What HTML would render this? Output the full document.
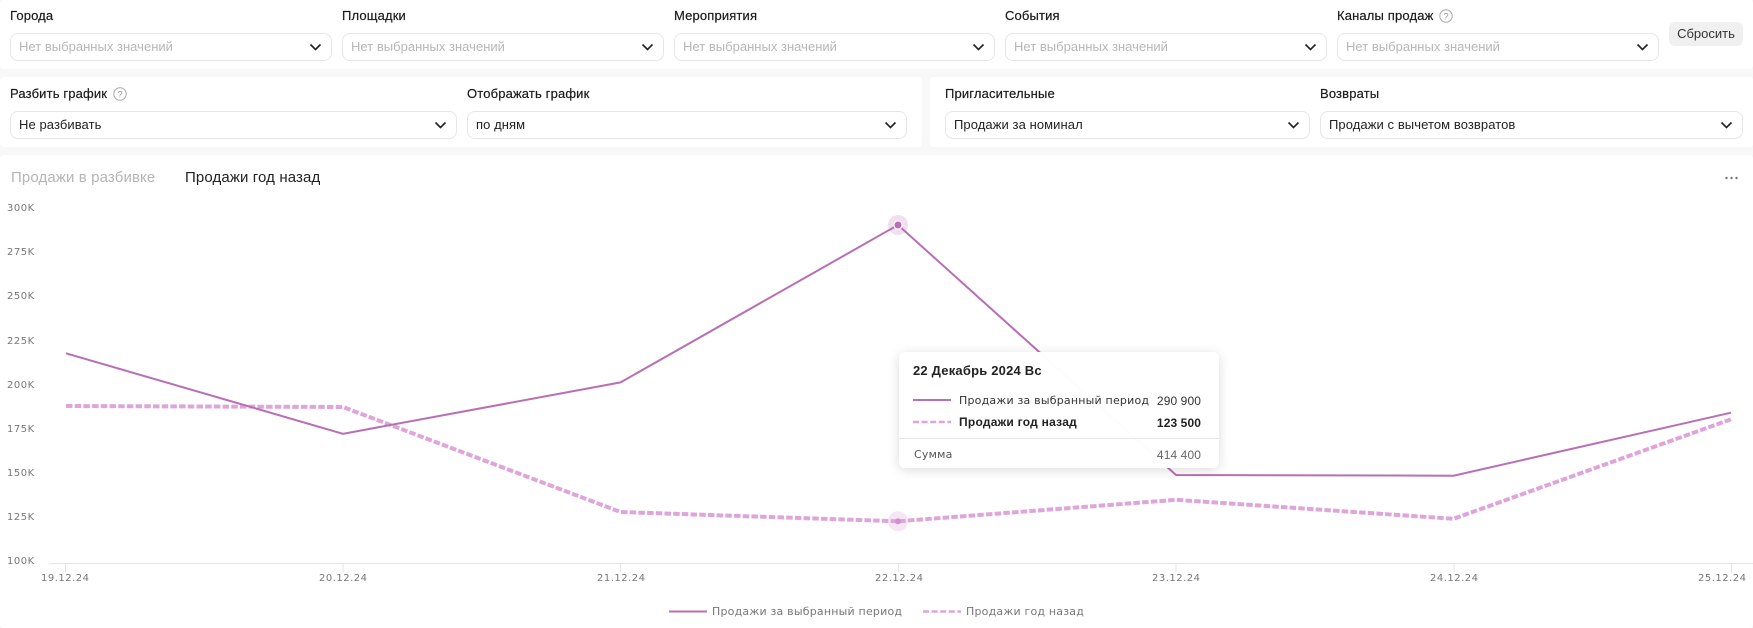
<!DOCTYPE html>
<html lang="ru"><head><meta charset="utf-8"><title>Продажи</title>
<style>
html,body{margin:0;padding:0;background:#f8f8f8}
body{width:1753px;height:628px;position:relative;overflow:hidden;font-family:"Liberation Sans",sans-serif;color:#222}
.p{position:absolute;background:#fff;border-radius:4px}
.l,.v,.s,.t,.a{position:absolute;white-space:nowrap}
.l{font-size:13px;line-height:16px;color:#1a1a1a;letter-spacing:.15px;-webkit-text-stroke:.2px #1a1a1a}
.s{box-sizing:border-box;height:28px;border:1px solid #e6e6e6;border-radius:8px;background:#fff;font-size:13px;line-height:26px;padding-left:8px;color:#222;letter-spacing:.08px}
.s.e{color:#b7b7b7;letter-spacing:.02px}
.s svg{position:absolute;right:9px;top:9px}
.a{font-family:"DejaVu Sans",sans-serif;font-size:10px;letter-spacing:.5px;color:#777;line-height:12px}
.t{font-family:"DejaVu Sans",sans-serif;font-size:11px;letter-spacing:.2px;line-height:14px;color:#333}
.b{font-family:"Liberation Sans",sans-serif;font-weight:bold;color:#222}
.n{font-family:"Liberation Sans",sans-serif;font-size:12px;line-height:14px;letter-spacing:.1px;position:absolute;white-space:nowrap;text-align:right;right:18px}
svg.q{position:absolute}
</style></head><body>
<div class="p" style="left:0;top:0;width:1753px;height:69px"></div>
<div class="p" style="left:0;top:77px;width:922px;height:70px"></div>
<div class="p" style="left:930px;top:77px;width:823px;height:70px"></div>
<div class="p" style="left:0;top:155px;width:1753px;height:473px"></div>

<div class="l" style="left:10px;top:8px">Города</div>
<div class="l" style="left:342px;top:8px">Площадки</div>
<div class="l" style="left:674px;top:8px">Мероприятия</div>
<div class="l" style="left:1005px;top:8px">События</div>
<div class="l" style="left:1337px;top:8px">Каналы продаж</div>
<svg class="q" style="left:1439px;top:9px" width="14" height="14" viewBox="0 0 14 14"><circle cx="7" cy="7" r="6.2" fill="none" stroke="#aaa"/><text x="7" y="10.5" text-anchor="middle" font-size="9.5" font-family="Liberation Sans" fill="#999">?</text></svg>

<div class="s e" style="left:10px;top:33px;width:322px">Нет выбранных значений<svg width="13" height="8" viewBox="0 0 13 8"><path d="M1.5 1.5 6.5 6.5l5-5" fill="none" stroke="#222" stroke-width="1.6"/></svg></div>
<div class="s e" style="left:342px;top:33px;width:322px">Нет выбранных значений<svg width="13" height="8" viewBox="0 0 13 8"><path d="M1.5 1.5 6.5 6.5l5-5" fill="none" stroke="#222" stroke-width="1.6"/></svg></div>
<div class="s e" style="left:674px;top:33px;width:321px">Нет выбранных значений<svg width="13" height="8" viewBox="0 0 13 8"><path d="M1.5 1.5 6.5 6.5l5-5" fill="none" stroke="#222" stroke-width="1.6"/></svg></div>
<div class="s e" style="left:1005px;top:33px;width:322px">Нет выбранных значений<svg width="13" height="8" viewBox="0 0 13 8"><path d="M1.5 1.5 6.5 6.5l5-5" fill="none" stroke="#222" stroke-width="1.6"/></svg></div>
<div class="s e" style="left:1337px;top:33px;width:322px">Нет выбранных значений<svg width="13" height="8" viewBox="0 0 13 8"><path d="M1.5 1.5 6.5 6.5l5-5" fill="none" stroke="#222" stroke-width="1.6"/></svg></div>
<div class="v" style="left:1669px;top:22px;width:74px;height:24px;background:#f0f0f0;border-radius:6px;font-size:13px;line-height:24px;text-align:center;color:#333">Сбросить</div>

<div class="l" style="left:10px;top:86px">Разбить график</div>
<svg class="q" style="left:113px;top:87px" width="14" height="14" viewBox="0 0 14 14"><circle cx="7" cy="7" r="6.2" fill="none" stroke="#aaa"/><text x="7" y="10.5" text-anchor="middle" font-size="9.5" font-family="Liberation Sans" fill="#999">?</text></svg>
<div class="l" style="left:467px;top:86px">Отображать график</div>
<div class="l" style="left:945px;top:86px">Пригласительные</div>
<div class="l" style="left:1320px;top:86px">Возвраты</div>

<div class="s" style="left:10px;top:111px;width:447px">Не разбивать<svg width="13" height="8" viewBox="0 0 13 8"><path d="M1.5 1.5 6.5 6.5l5-5" fill="none" stroke="#222" stroke-width="1.6"/></svg></div>
<div class="s" style="left:467px;top:111px;width:440px">по дням<svg width="13" height="8" viewBox="0 0 13 8"><path d="M1.5 1.5 6.5 6.5l5-5" fill="none" stroke="#222" stroke-width="1.6"/></svg></div>
<div class="s" style="left:945px;top:111px;width:365px">Продажи за номинал<svg width="13" height="8" viewBox="0 0 13 8"><path d="M1.5 1.5 6.5 6.5l5-5" fill="none" stroke="#222" stroke-width="1.6"/></svg></div>
<div class="s" style="left:1320px;top:111px;width:423px">Продажи с вычетом возвратов<svg width="13" height="8" viewBox="0 0 13 8"><path d="M1.5 1.5 6.5 6.5l5-5" fill="none" stroke="#222" stroke-width="1.6"/></svg></div>

<div class="v" style="left:11px;top:169px;font-size:15px;line-height:18px;color:#b5b5b5;letter-spacing:.12px">Продажи в разбивке</div>
<div class="v" style="left:185px;top:169px;font-size:15px;line-height:18px;color:#222;letter-spacing:.12px">Продажи год назад</div>
<svg class="q" style="left:1724px;top:175px" width="16" height="6" viewBox="0 0 16 6"><circle cx="2.5" cy="3" r="1.2" fill="#777"/><circle cx="7.5" cy="3" r="1.2" fill="#777"/><circle cx="12.5" cy="3" r="1.2" fill="#777"/></svg>

<div class="a" style="left:7px;top:203px">300K</div>
<div class="a" style="left:7px;top:247px">275K</div>
<div class="a" style="left:7px;top:291px">250K</div>
<div class="a" style="left:7px;top:336px">225K</div>
<div class="a" style="left:7px;top:380px">200K</div>
<div class="a" style="left:7px;top:424px">175K</div>
<div class="a" style="left:7px;top:468px">150K</div>
<div class="a" style="left:7px;top:512px">125K</div>
<div class="a" style="left:7px;top:556px">100K</div>

<svg class="q" style="left:0;top:0" width="1753" height="628" viewBox="0 0 1753 628">
<path d="M49 563.5H1753" stroke="#e5e5e5" fill="none"/>
<path d="M65.5 563v9M343 563v9M620.5 563v9M898.5 563v9M1176 563v9M1454 563v9M1731.5 563v9" stroke="#e5e5e5" fill="none"/>
<circle cx="898" cy="225" r="10" fill="#f1dff0"/>
<circle cx="898" cy="521.3" r="10" fill="#f5e6f4"/>
<polyline points="66,406 343,407 620.5,512 898,521.3 1176,499.8 1453.5,518.8 1731,419.3" fill="none" stroke="#dfa5db" stroke-width="4" stroke-dasharray="6.5 2.2"/>
<polyline points="66,353.3 343,433.8 620.5,382.4 898,225 1176,475 1453.5,475.7 1731,412.7" fill="none" stroke="#b96fb4" stroke-width="2"/>
<circle cx="898" cy="225" r="4.6" fill="#fff"/><circle cx="898" cy="225" r="3.5" fill="#b96fb4"/>
<circle cx="898" cy="521.3" r="3" fill="#d48fd0"/>
<path d="M669 611.5h38" stroke="#b96fb4" stroke-width="2"/>
<path d="M923 611.5h38" stroke="#dfa5db" stroke-width="2.5" stroke-dasharray="6 2.6"/>
</svg>

<div class="a" style="left:41px;top:573px">19.12.24</div>
<div class="a" style="left:319px;top:573px">20.12.24</div>
<div class="a" style="left:597px;top:573px">21.12.24</div>
<div class="a" style="left:875px;top:573px">22.12.24</div>
<div class="a" style="left:1152px;top:573px">23.12.24</div>
<div class="a" style="left:1430px;top:573px">24.12.24</div>
<div class="a" style="left:1698px;top:573px">25.12.24</div>

<div class="t" style="left:712px;top:605px;color:#777">Продажи за выбранный период</div>
<div class="t" style="left:966px;top:605px;color:#777">Продажи год назад</div>

<div class="v" style="left:899px;top:352px;width:320px;height:116px;background:rgba(255,255,255,.98);border-radius:6px;box-shadow:0 2px 12px rgba(0,0,0,.14)">
<div class="t b" style="left:14px;top:12px;font-size:13px;letter-spacing:.2px">22 Декабрь 2024 Вс</div>
<svg class="q" style="left:14px;top:40px" width="38" height="36" viewBox="0 0 38 36"><path d="M0 8h38" stroke="#b96fb4" stroke-width="2"/><path d="M0 30h38" stroke="#dfa5db" stroke-width="2.5" stroke-dasharray="6 2.6"/></svg>
<div class="t" style="left:60px;top:42px">Продажи за выбранный период</div>
<div class="n" style="top:42px;color:#333">290 900</div>
<div class="t b" style="left:60px;top:63px;font-size:12px;letter-spacing:.25px">Продажи год назад</div>
<div class="n" style="top:64px;font-weight:bold;color:#222">123 500</div>
<div style="position:absolute;left:0;right:0;top:86px;height:1px;background:#e5e5e5"></div>
<div class="t" style="left:15px;top:96px;color:#555">Сумма</div>
<div class="n" style="top:96px;color:#666">414 400</div>
</div>
</body></html>
